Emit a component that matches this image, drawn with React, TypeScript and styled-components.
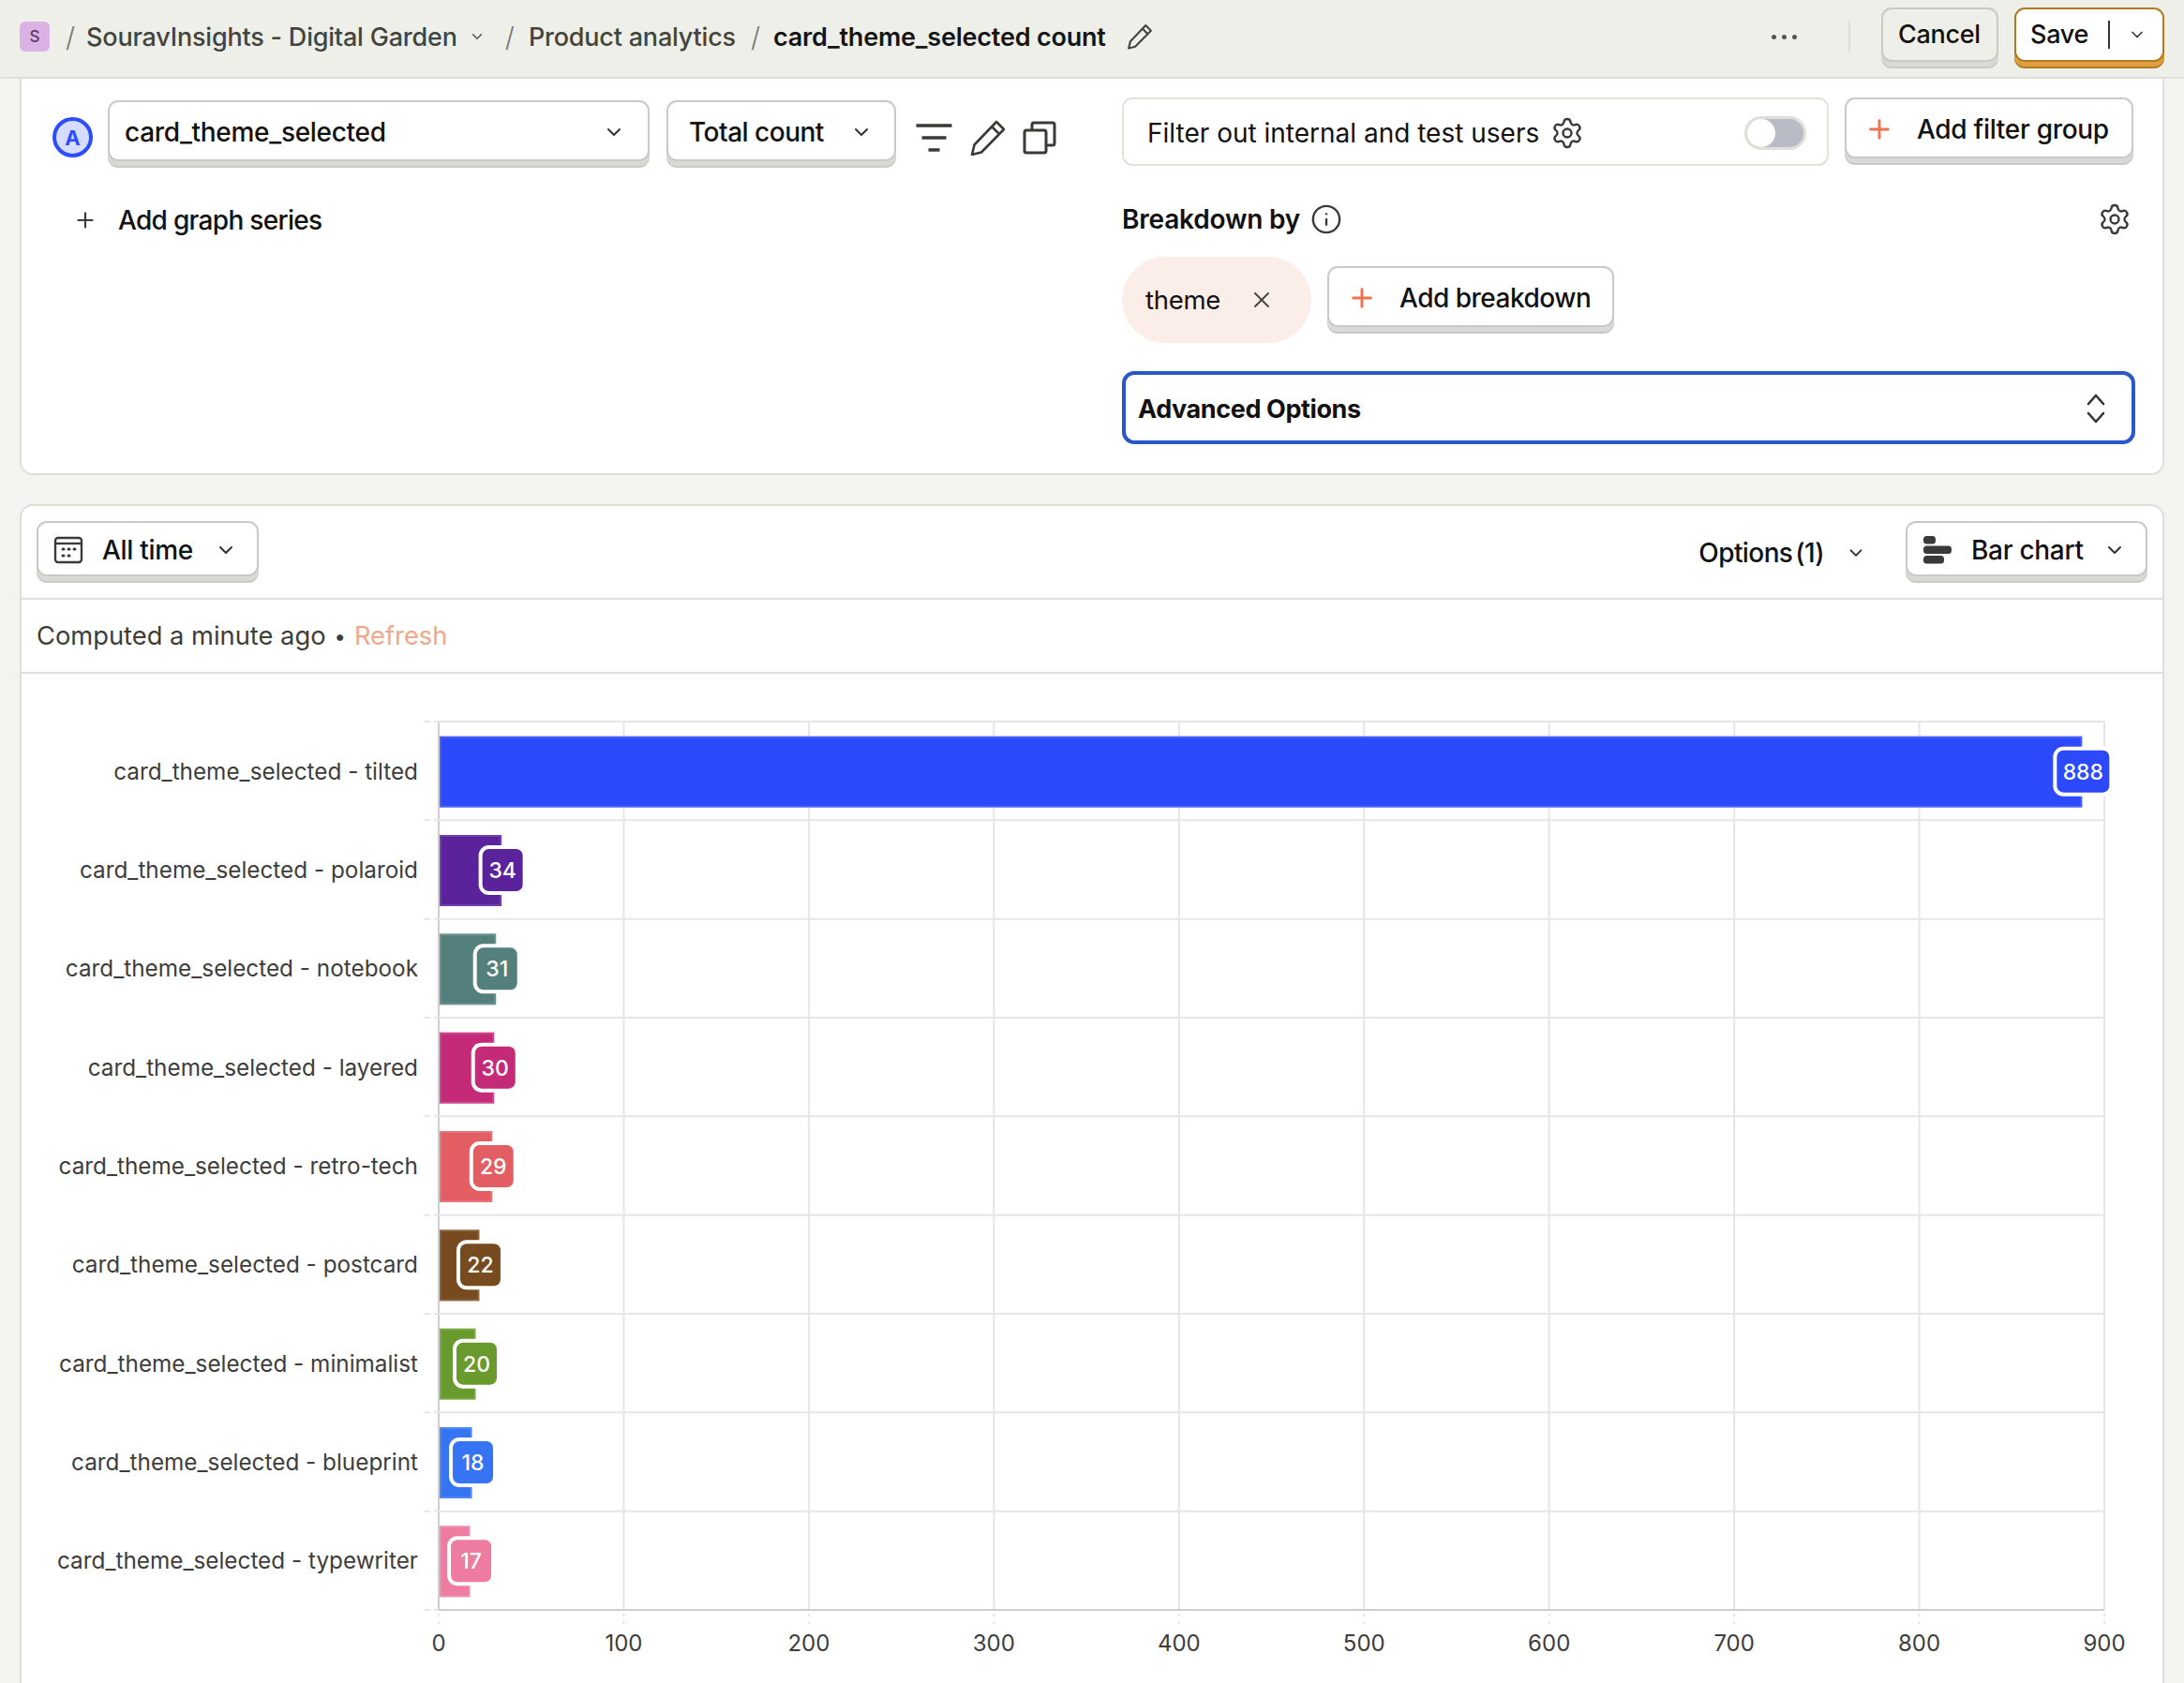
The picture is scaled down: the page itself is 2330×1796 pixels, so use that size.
import React from 'react'
import styled, { createGlobalStyle } from 'styled-components'
import { ChevronDown, Plus, X, Settings, Info } from 'lucide-react'

const GlobalStyle = createGlobalStyle`
  html, body {
    margin: 0;
    padding: 0;
    background: #f3f3f0;
    font-family: Inter, "Liberation Sans", sans-serif;
    color: #111;
  }
  * { box-sizing: border-box; }
`

const Page = styled.div`
  width: 2330px;
  height: 1796px;
  overflow: hidden;
`

const TopBar = styled.header`
  height: 84px;
  display: flex;
  align-items: center;
  padding: 0 21px 4px;
  background: #eeefe9;
  border-bottom: 2px solid #dedfd8;
`

const Logo = styled.div`
  width: 32px;
  height: 32px;
  border-radius: 6px;
  background: #dcb1e3;
  color: #5f3b66;
  font-size: 17px;
  font-weight: 500;
  display: flex;
  align-items: center;
  justify-content: center;
`

const Slash = styled.span<{ $left: number; $right: number }>`
  color: #77776f;
  font-size: 29px;
  font-weight: 300;
  margin: 0 ${p => p.$right}px 0 ${p => p.$left}px;
`

const Crumb = styled.span<{ $current?: boolean }>`
  font-size: 27px;
  letter-spacing: -0.2px;
  font-weight: ${p => (p.$current ? 600 : 500)};
  color: ${p => (p.$current ? '#151515' : '#44443f')};
  white-space: nowrap;
`

const CrumbChevron = styled(ChevronDown)`
  margin: 0 19px 0 12px;
  color: #55554f;
`

const TitleEdit = styled.span`
  margin-left: 22px;
  display: flex;
  color: #44443f;
`

const TopActions = styled.div`
  margin-left: auto;
  display: flex;
  align-items: center;
`

const Dots = styled.div`
  display: flex;
  gap: 6px;
  margin-right: 55px;
  span {
    width: 5px;
    height: 5px;
    border-radius: 50%;
    background: #55554f;
  }
`

const VDivider = styled.div`
  width: 2px;
  height: 34px;
  background: #dedfd8;
  margin-right: 33px;
`

const Button = styled.div<{ $width?: number; $height?: number; $flat?: boolean; $primary?: boolean; $pad?: number; $left?: number; $tight?: boolean }>`
  display: flex;
  align-items: center;
  height: ${p => p.$height ?? 65}px;
  width: ${p => (p.$width ? `${p.$width}px` : 'auto')};
  margin: 0 0 7px ${p => p.$left ?? 0}px;
  padding: 2px 0 0 ${p => p.$pad ?? 0}px;
  border-radius: 11px;
  font-size: 28px;
  letter-spacing: ${p => (p.$tight ? -0.5 : -0.3)}px;
  font-weight: 500;
  white-space: nowrap;
  background: ${p => (p.$flat ? '#eeefe9' : '#fff')};
  border: 2px solid ${p => (p.$primary ? '#b17a20' : '#c9c9c7')};
  box-shadow: 0 5px 0 0 ${p => (p.$primary ? '#e09f40' : '#d9d9d6')},
    0 7px 0 0 ${p => (p.$primary ? '#b17a20' : '#c9c9c7')};
`

const TopButton = styled(Button)`
  height: 58px;
  margin-top: 2px;
  padding-top: 0;
  font-size: 27px;
`

const SaveDivider = styled.div`
  width: 2px;
  height: 30px;
  background: #333;
  margin: 0 19px 0 21px;
`

const Main = styled.main`
  padding: 0 21px;
`

const QueryPanel = styled.section`
  height: 423px;
  display: grid;
  grid-template-columns: 1174px 1080px;
  background: #fff;
  border: 2px solid #dedfd8;
  border-top: none;
  border-radius: 0 0 14px 14px;
`

const LeftColumn = styled.div`
  padding: 23px 0 0 33px;
`

const SeriesRow = styled.div`
  display: flex;
  align-items: flex-start;
`

const SeriesBadge = styled.div`
  width: 43px;
  height: 43px;
  margin: 18px 16px 0 0;
  border-radius: 50%;
  border: 4px solid #2c4cff;
  background: #d5dcff;
  color: #2c4cff;
  font-size: 22px;
  font-weight: 700;
  display: flex;
  align-items: center;
  justify-content: center;
`

const SelectText = styled.span`
  flex: 1;
`

const IconTools = styled.div`
  display: flex;
  align-items: center;
  margin: 20px 0 0 20px;
  gap: 17px;
  color: #3a3a38;
`

const AddSeries = styled.div`
  display: flex;
  align-items: center;
  gap: 22px;
  margin: 39px 0 0 22px;
  font-size: 28px;
  letter-spacing: -0.7px;
  font-weight: 500;
  svg { color: #3a3a38; }
`

const RightColumn = styled.div`
  padding-top: 20px;
  display: flex;
  flex-direction: column;
`

const FilterRow = styled.div`
  display: flex;
  gap: 17px;
`

const FilterBox = styled.div`
  width: 754px;
  height: 73px;
  display: flex;
  align-items: center;
  padding: 2px 22px 0 25px;
  border: 2px solid #e2e3dd;
  border-radius: 11px;
  font-size: 28px;
  font-weight: 400;
  svg { margin-left: 12px; color: #3a3a38; }
`

const Toggle = styled.div`
  margin-left: auto;
  width: 66px;
  height: 36px;
  border-radius: 18px;
  border: 3px solid #dedfd8;
  background: #b9bcc4;
  display: flex;
  align-items: center;
  span {
    width: 30px;
    height: 30px;
    border-radius: 50%;
    background: #fff;
  }
`

const BreakdownHeader = styled.div`
  display: flex;
  align-items: center;
  margin-top: 37px;
  height: 40px;
  font-size: 28px;
  letter-spacing: -0.2px;
  font-weight: 600;
  svg { margin-left: 11px; color: #3a3a38; }
`

const HeaderGear = styled(Settings)`
  margin-left: auto !important;
  margin-right: 3px;
`

const BreakdownRow = styled.div`
  display: flex;
  align-items: center;
  gap: 17px;
  margin-top: 20px;
`

const ThemeChip = styled.div`
  width: 202px;
  height: 92px;
  border-radius: 46px;
  background: #fbeee9;
  display: flex;
  align-items: center;
  padding-left: 25px;
  font-size: 27.5px;
  letter-spacing: -0.3px;
  svg { margin-left: 30px; color: #44443f; }
`

const AddPlus = styled(Plus)`
  color: #f0724e;
  margin: 0 24px 0 19px;
`

const AdvancedBox = styled.div`
  width: 1081px;
  height: 78px;
  margin-top: 30px;
  display: flex;
  align-items: center;
  justify-content: space-between;
  padding: 2px 26px 0 13px;
  border: 4px solid #2a58c9;
  border-radius: 13px;
  font-size: 27px;
  letter-spacing: -0.4px;
  font-weight: 700;
`

const ChartPanel = styled.section`
  margin-top: 31px;
  height: 1260px;
  background: #fff;
  border: 2px solid #dedfd8;
  border-bottom: none;
  border-radius: 14px 14px 0 0;
`

const ChartToolbar = styled.div`
  height: 100px;
  display: flex;
  align-items: flex-start;
  padding: 16px 16px 0 16px;
  border-bottom: 2px solid #dedfd8;
  color: #111;
`

const OptionsLabel = styled.div`
  margin-left: auto;
  margin-right: 42px;
  height: 59px;
  display: flex;
  align-items: center;
  padding-top: 8px;
  font-size: 28px;
  letter-spacing: -0.6px;
  font-weight: 500;
  white-space: nowrap;
  svg { margin-left: 23px; color: #3a3a38; }
`

const OptionsCount = styled.span`
  margin-left: 3px;
`

const StatusRow = styled.div`
  height: 79px;
  display: flex;
  align-items: center;
  padding-left: 16px;
  border-bottom: 2px solid #dedfd8;
  font-size: 27.3px;
  color: #3d3d3a;
  white-space: nowrap;
`

const StatusDot = styled.span`
  margin: 0 9px;
  font-size: 22px;
`

const RefreshLink = styled.span`
  color: #f0a78c;
`

const ChartSvg = styled.svg`
  display: block;
  font-family: Inter, "Liberation Sans", sans-serif;
`

const Chevron = styled(ChevronDown)<{ $right?: number }>`
  margin-left: auto;
  margin-right: ${p => p.$right ?? 14}px;
  color: #333;
  flex: none;
`

const LeadIcon = styled.svg`
  margin: 0 20px 0 16px;
  flex: none;
  color: #3a3a38;
`

const PENCIL = 'M29 3l8 8L13 35.5 3 38l2.5-10.5z M24 8l8 8'

const EditIcon = ({ size, weight }: { size: number; weight: number }) => (
  <svg width={size} height={size} viewBox='0 0 40 40' fill='none' stroke='currentColor' strokeWidth={weight} strokeLinejoin='round'>
    <path d={PENCIL} />
  </svg>
)

const FilterIcon = () => (
  <svg width='41' height='32' viewBox='0 0 40 32' fill='none' stroke='currentColor' strokeWidth='3.6'>
    <path d='M1 3h38M7 16h26M14 29h12' />
  </svg>
)

const CopyIcon = () => (
  <svg width='36' height='36' viewBox='0 0 36 36' fill='none' stroke='currentColor' strokeWidth='3'>
    <rect x='2' y='10' width='23' height='24' rx='2' />
    <path d='M10 10V4a2 2 0 0 1 2-2h20a2 2 0 0 1 2 2v20a2 2 0 0 1-2 2h-7' />
  </svg>
)

const CalendarIcon = () => (
  <LeadIcon width='32' height='30' viewBox='0 0 32 30' fill='none' stroke='currentColor' strokeWidth='2.4'>
    <rect x='2' y='2' width='28' height='26' rx='3' />
    <path d='M2 8h28' />
    <path d='M10 14h1M16 14h1M22 14h1M10 21h1M16 21h1' strokeWidth='3' strokeLinecap='round' />
  </LeadIcon>
)

const BarsIcon = () => (
  <LeadIcon width='32' height='30' viewBox='0 0 32 30' fill='currentColor'>
    <rect x='1' y='0' width='13' height='8.5' rx='3.5' />
    <rect x='1' y='10.5' width='30' height='8.5' rx='3.5' />
    <rect x='1' y='21' width='22' height='8.5' rx='3.5' />
  </LeadIcon>
)

const UpDownIcon = () => (
  <svg width='24' height='36' viewBox='0 0 24 36' fill='none' stroke='#333' strokeWidth='2.6' strokeLinecap='round' strokeLinejoin='round'>
    <path d='M4 13l8-9 8 9M4 23l8 9 8-9' />
  </svg>
)

const SERIES = [
  { name: 'tilted', value: 888, color: '#2c49fb' },
  { name: 'polaroid', value: 34, color: '#5a239b' },
  { name: 'notebook', value: 31, color: '#53807c' },
  { name: 'layered', value: 30, color: '#c42a78' },
  { name: 'retro-tech', value: 29, color: '#e25e62' },
  { name: 'postcard', value: 22, color: '#784a1f' },
  { name: 'minimalist', value: 20, color: '#689a2d' },
  { name: 'blueprint', value: 18, color: '#3574f2' },
  { name: 'typewriter', value: 17, color: '#ee7ca0' },
]

const PLOT_LEFT = 445
const PLOT_TOP = 51
const UNIT = 1.9745
const ROW = 105.33
const PLOT_RIGHT = PLOT_LEFT + 900 * UNIT
const PLOT_BOTTOM = PLOT_TOP + 9 * ROW

const BarChart = () => (
  <ChartSvg width='2284' height='1080' viewBox='0 0 2284 1080'>
    {[0, 100, 200, 300, 400, 500, 600, 700, 800, 900].map(tick => {
      const x = PLOT_LEFT + tick * UNIT
      return (
        <g key={tick}>
          <line x1={x} x2={x} y1={PLOT_TOP} y2={PLOT_BOTTOM} stroke={tick === 0 ? '#cdcdd2' : '#e5e5ea'} strokeWidth='2' />
          <line x1={x} x2={x} y1={PLOT_BOTTOM + 4} y2={PLOT_BOTTOM + 16} stroke='#e5e5ea' strokeWidth='2' strokeDasharray='3 5' />
          <text x={x} y={PLOT_BOTTOM + 44} textAnchor='middle' fontSize='24' fill='#3d3d3d'>{tick}</text>
        </g>
      )
    })}
    {SERIES.map((_, i) => i).concat(9).map(i => {
      const y = PLOT_TOP + i * ROW
      return (
        <g key={i}>
          <line x1={PLOT_LEFT} x2={PLOT_RIGHT} y1={y} y2={y} stroke={i === 9 ? '#cdcdd2' : '#e5e5ea'} strokeWidth='2' />
          <line x1={PLOT_LEFT - 16} x2={PLOT_LEFT} y1={y} y2={y} stroke='#e5e5ea' strokeWidth='2' strokeDasharray='7 4' />
        </g>
      )
    })}
    {SERIES.map((s, i) => {
      const mid = PLOT_TOP + i * ROW + ROW / 2 + 1
      const end = PLOT_LEFT + s.value * UNIT
      const tagWidth = s.value > 99 ? 56 : 43
      return (
        <g key={s.name}>
          <text x='423' y={mid + 8} textAnchor='end' fontSize='24.3' fill='#3d3d3d'>card_theme_selected - {s.name}</text>
          <rect x={PLOT_LEFT + 1} y={mid - 38} width={end - PLOT_LEFT - 1} height='76' fill={s.color} />
          <rect x={PLOT_LEFT + 2} y={mid - 37} width={end - PLOT_LEFT - 3} height='74' fill='none' stroke='#fff' strokeOpacity='0.14' strokeWidth='2' />
          <rect x={end - tagWidth / 2 - 3} y={mid - 27} width={tagWidth + 7} height='53' rx='11' fill='#fff' />
          <rect x={end - tagWidth / 2 + 1} y={mid - 23} width={tagWidth} height='45' rx='7' fill={s.color} />
          <text x={end + 1} y={mid + 8} textAnchor='middle' fontSize='23' fontWeight='500' fill='#fff'>{s.value}</text>
        </g>
      )
    })}
  </ChartSvg>
)

export default function App() {
  return (
    <Page>
      <GlobalStyle />
      <TopBar>
        <Logo>S</Logo>
        <Slash $left={17} $right={12}>/</Slash>
        <Crumb>SouravInsights - Digital Garden</Crumb>
        <CrumbChevron size={18} />
        <Slash $left={2} $right={15}>/</Slash>
        <Crumb>Product analytics</Crumb>
        <Slash $left={16} $right={14}>/</Slash>
        <Crumb $current>card_theme_selected count</Crumb>
        <TitleEdit>
          <EditIcon size={28} weight={3} />
        </TitleEdit>
        <TopActions>
          <Dots><span /><span /><span /></Dots>
          <VDivider />
          <TopButton $flat $width={125} $pad={16}>Cancel</TopButton>
          <TopButton $primary $width={160} $pad={15} $left={17}>
            Save
            <SaveDivider />
            <ChevronDown size={20} color='#333' />
          </TopButton>
        </TopActions>
      </TopBar>
      <Main>
        <QueryPanel>
          <LeftColumn>
            <SeriesRow>
              <SeriesBadge>A</SeriesBadge>
              <Button $width={578} $pad={16}>
                <SelectText>card_theme_selected</SelectText>
                <Chevron size={24} $right={24} />
              </Button>
              <Button $width={245} $pad={22} $left={18} $tight>
                <SelectText>Total count</SelectText>
                <Chevron size={24} $right={23} />
              </Button>
              <IconTools>
                <FilterIcon />
                <EditIcon size={40} weight={2.6} />
                <CopyIcon />
              </IconTools>
            </SeriesRow>
            <AddSeries>
              <Plus size={26} strokeWidth={2} />
              Add graph series
            </AddSeries>
          </LeftColumn>
          <RightColumn>
            <FilterRow>
              <FilterBox>
                Filter out internal and test users
                <Settings size={36} strokeWidth={1.6} />
                <Toggle><span /></Toggle>
              </FilterBox>
              <Button $width={308}>
                <AddPlus size={32} strokeWidth={2.2} />
                Add filter group
              </Button>
            </FilterRow>
            <BreakdownHeader>
              Breakdown by
              <Info size={34} strokeWidth={1.7} />
              <HeaderGear size={36} strokeWidth={1.6} />
            </BreakdownHeader>
            <BreakdownRow>
              <ThemeChip>
                theme
                <X size={28} strokeWidth={1.6} />
              </ThemeChip>
              <Button $width={306} $tight>
                <AddPlus size={32} strokeWidth={2.2} />
                Add breakdown
              </Button>
            </BreakdownRow>
            <AdvancedBox>
              Advanced Options
              <UpDownIcon />
            </AdvancedBox>
          </RightColumn>
        </QueryPanel>
        <ChartPanel>
          <ChartToolbar>
            <Button $width={237} $height={59}>
              <CalendarIcon />
              All time
              <Chevron size={24} $right={21} />
            </Button>
            <OptionsLabel>
              Options<OptionsCount>(1)</OptionsCount>
              <ChevronDown size={22} />
            </OptionsLabel>
            <Button $width={258} $height={59}>
              <BarsIcon />
              Bar chart
              <Chevron size={24} $right={21} />
            </Button>
          </ChartToolbar>
          <StatusRow>
            Computed a minute ago
            <StatusDot>•</StatusDot>
            <RefreshLink>Refresh</RefreshLink>
          </StatusRow>
          <BarChart />
        </ChartPanel>
      </Main>
    </Page>
  )
}
